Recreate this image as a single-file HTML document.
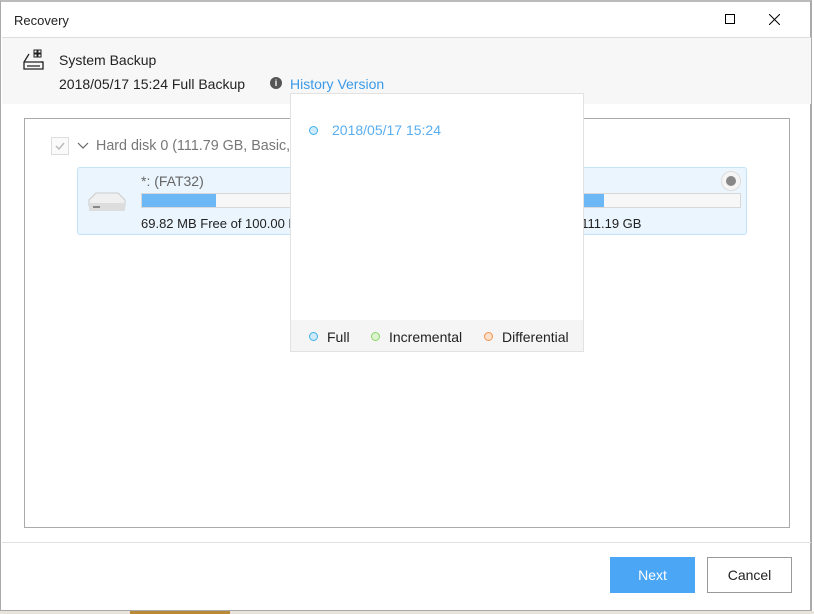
<!DOCTYPE html>
<html><head><style>
*{margin:0;padding:0;box-sizing:border-box}
body{width:814px;height:614px;background:#fff;position:relative;overflow:hidden;font-family:"Segoe UI","Liberation Sans",sans-serif;font-size:14px;color:#222}
.a{position:absolute}
</style></head><body>
<div class="a" style="left:0;top:0;width:812px;height:612px;border:1px solid #aaa;border-top:2px solid #bbb;border-right:2px solid #aaa;border-bottom:2px solid #aaa"></div>
<div class="a" style="left:0;top:611px;width:814px;height:3px;background:#e8e4dc"></div>
<div class="a" style="left:130px;top:611px;width:100px;height:3px;background:#b88a35"></div>
<div class="a" style="left:14px;top:13px;font-size:13px">Recovery</div>
<div class="a" style="left:725px;top:14px;width:10px;height:10px;border:1px solid #000"></div>
<svg class="a" style="left:769px;top:14px" width="11" height="11"><path d="M0 0L11 11M11 0L0 11" stroke="#000" stroke-width="1"/></svg>
<div class="a" style="left:2px;top:37px;width:809px;height:1px;background:#ddd"></div>
<div class="a" style="left:2px;top:38px;width:809px;height:66px;background:#f7f7f7"></div>
<svg class="a" style="left:22px;top:49px" width="24" height="22"><rect x="12" y="1" width="3" height="3" fill="none" stroke="#222"/><rect x="16" y="1" width="3" height="3" fill="none" stroke="#222"/><rect x="12" y="5" width="3" height="3" fill="none" stroke="#222"/><rect x="16" y="5" width="3" height="3" fill="none" stroke="#222"/><path d="M7 5L2 13V20H21V13H19" fill="none" stroke="#222" stroke-width="1.3"/><path d="M2 13H21M5 17H18" stroke="#222" stroke-width="1.3"/></svg>
<div class="a" style="left:59px;top:52px">System Backup</div>
<div class="a" style="left:59px;top:76px">2018/05/17 15:24 Full Backup</div>
<div class="a" style="left:270px;top:77px;width:12px;height:12px;border-radius:50%;background:#555;color:#fff;font-size:9px;font-weight:bold;text-align:center;line-height:12px">i</div>
<div class="a" style="left:290px;top:76px;color:#3a9ae8">History Version</div>
<div class="a" style="left:24px;top:118px;width:766px;height:410px;border:1px solid #aaa"></div>
<div class="a" style="left:51px;top:137px;width:18px;height:18px;border:1px solid #ddd;background:#fafafa"></div>
<svg class="a" style="left:54px;top:140px" width="12" height="12"><path d="M2 6L5 9L10 3" fill="none" stroke="#bbb" stroke-width="1.5"/></svg>
<svg class="a" style="left:77px;top:142px" width="12" height="8"><path d="M1 1L6 6L11 1" fill="none" stroke="#666" stroke-width="1.2"/></svg>
<div class="a" style="left:96px;top:138px;font-size:14.3px;color:#777">Hard disk 0 (111.79 GB, Basic, MBR)</div>
<div class="a" style="left:77px;top:167px;width:670px;height:68px;background:#eaf5fd;border:1px solid #c5e2f7;border-radius:3px"></div>
<svg class="a" style="left:88px;top:192px" width="38" height="20"><path d="M8 1H30L37 8V14H1V8Z" fill="#f0f0f0" stroke="#ccc"/><rect x="1" y="11" width="36" height="8" fill="#ddd"/><rect x="5" y="14" width="7" height="2" fill="#888"/></svg>
<div class="a" style="left:141px;top:173px;color:#666;font-size:14px">*: (FAT32)</div>
<div class="a" style="left:141px;top:193px;width:155px;height:15px;background:#f7f7f7;border:1px solid #d8d8d8"></div>
<div class="a" style="left:142px;top:194px;width:74px;height:13px;background:#6cb8f6"></div>
<div class="a" style="left:141px;top:216px;font-size:13px">69.82 MB Free of 100.00 MB</div>
<div class="a" style="left:560px;top:193px;width:181px;height:15px;background:#f7f7f7;border:1px solid #d8d8d8"></div>
<div class="a" style="left:561px;top:194px;width:43px;height:13px;background:#6cb8f6"></div>
<div class="a" style="left:560px;top:216px;font-size:13px;background:#eaf5fd;padding-left:14px">f 111.19 GB</div>
<div class="a" style="left:721px;top:171px;width:20px;height:20px;border-radius:50%;background:#f5f5f5;border:1px solid #ddd"></div>
<div class="a" style="left:726px;top:176px;width:10px;height:10px;border-radius:50%;background:#888"></div>
<div class="a" style="left:290px;top:93px;width:294px;height:259px;background:#fff;border:1px solid #e2e2e2"></div>
<div class="a" style="left:291px;top:320px;width:292px;height:31px;background:#f5f5f5"></div>
<div class="a" style="left:309px;top:126px;width:9px;height:9px;border-radius:50%;border:1.5px solid #3fb0e8;background:#cfeafb"></div>
<div class="a" style="left:332px;top:122px;color:#5aaef0">2018/05/17 15:24</div>
<div class="a" style="left:309px;top:332px;width:9px;height:9px;border-radius:50%;border:1.5px solid #3fb0e8;background:#cfeafb"></div>
<div class="a" style="left:327px;top:329px">Full</div>
<div class="a" style="left:371px;top:332px;width:9px;height:9px;border-radius:50%;border:1.5px solid #8ad36a;background:#dcf3d0"></div>
<div class="a" style="left:389px;top:329px">Incremental</div>
<div class="a" style="left:484px;top:332px;width:9px;height:9px;border-radius:50%;border:1.5px solid #f4934a;background:#fde0cc"></div>
<div class="a" style="left:502px;top:329px">Differential</div>
<div class="a" style="left:2px;top:542px;width:809px;height:1px;background:#e0e0e0"></div>
<div class="a" style="left:610px;top:557px;width:85px;height:36px;background:#4ba6f5;color:#fff;text-align:center;line-height:36px">Next</div>
<div class="a" style="left:707px;top:557px;width:85px;height:36px;border:1px solid #999;text-align:center;line-height:34px">Cancel</div>
</body></html>
